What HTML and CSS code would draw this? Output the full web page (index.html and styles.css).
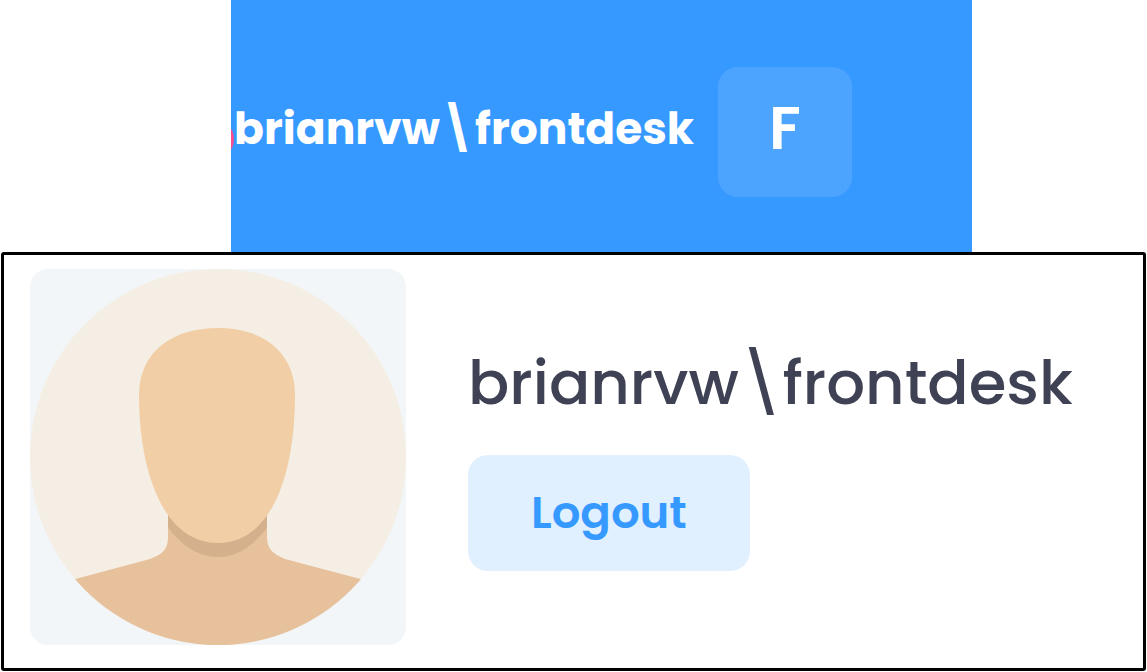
FILE: index.html
```html
<!DOCTYPE html>
<html lang="en">
<head>
<meta charset="utf-8">
<meta name="viewport" content="width=device-width, initial-scale=1">
<title>User profile</title>
<link rel="stylesheet" href="styles.css">
</head>
<body>
<header class="topbar">
  <span class="status-dot"></span>
  <span class="topbar-name">brianrvw\frontdesk</span>
  <button class="initial" type="button">F</button>
</header>
<main class="card">
  <svg class="avatar" viewBox="0 0 376 376" role="img" aria-label="User avatar">
    <defs>
      <clipPath id="disc"><circle cx="188" cy="188" r="188"/></clipPath>
      <clipPath id="neck"><path d="M138 235V268C138 280 133 285 120 290L0 322V376H376V322L255 290C243 285 237 280 237 268V235Z"/></clipPath>
    </defs>
    <g clip-path="url(#disc)">
      <rect width="376" height="376" fill="#f5eee4"/>
      <g clip-path="url(#neck)">
        <rect width="376" height="376" fill="#e6c19c"/>
        <path d="M130 235V247C148 276 168 288 188 288S227 276 245 247V235Z" fill="#d4b08c"/>
      </g>
      <path d="M188 59C141 59 109 84 109 126C109 202 133 274 188 274S265 202 265 126C265 84 234 59 188 59Z" fill="#f1cea5"/>
    </g>
  </svg>
  <section class="details">
    <h1 class="name">brianrvw\frontdesk</h1>
    <button class="logout" type="button">Logout</button>
  </section>
</main>
</body>
</html>
```
FILE: styles.css
```css
* {
  box-sizing: border-box;
}

body {
  margin: 0;
  background: #fff;
  font-family: Poppins, Inter, "Open Sans", sans-serif;
}

button {
  border: 0;
  font-family: inherit;
  cursor: pointer;
}

.topbar {
  position: relative;
  display: flex;
  align-items: center;
  justify-content: flex-end;
  gap: 24px;
  margin: 0 175px 0 231px;
  padding: 67px 120px 55px 0;
  background: #3699ff;
  overflow: hidden;
}

.status-dot {
  position: absolute;
  left: -37px;
  top: 119px;
  width: 40px;
  height: 40px;
  border-radius: 50%;
  background: #f64e90;
}

.topbar-name {
  position: relative;
  padding-bottom: 6px;
  color: #fff;
  font-size: 44px;
  font-weight: 700;
  line-height: 60px;
  white-space: nowrap;
}

.initial {
  flex: none;
  width: 134px;
  height: 130px;
  padding: 0 0 8px;
  border-radius: 20px;
  background: #4da4ff;
  color: #fff;
  font-size: 60px;
  font-weight: 600;
}

.card {
  display: flex;
  align-items: center;
  gap: 62px;
  margin: 0 1px;
  padding: 14px 26px 23px;
  border: 3px solid #000;
  border-radius: 3px;
  background: #fff;
}

.avatar {
  flex: none;
  width: 376px;
  height: 376px;
  border-radius: 18px;
  background: #f2f6f9;
}

.details {
  display: flex;
  flex-direction: column;
  align-items: flex-start;
  gap: 32px;
}

.name {
  margin: 0;
  color: #3f4254;
  font-size: 61px;
  font-weight: 500;
  line-height: 80px;
  white-space: nowrap;
}

.logout {
  padding: 28px 63px;
  border-radius: 20px;
  background: #e1f0ff;
  color: #3699ff;
  font-size: 45px;
  font-weight: 600;
  line-height: 60px;
}
```
